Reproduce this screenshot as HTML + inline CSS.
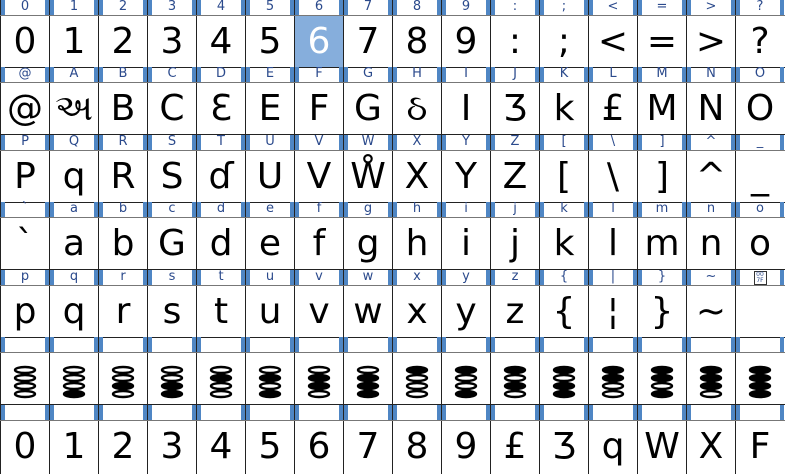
<!DOCTYPE html><html><head><meta charset="utf-8"><style>
body{margin:0;width:785px;height:474px;background:#fff;overflow:hidden;position:relative;font-family:"DejaVu Sans","Liberation Sans","Noto Sans CJK SC",sans-serif}
.r{position:absolute;left:0;width:785px;height:68px}
.h,.g{position:absolute;left:0;width:785px;display:flex}
.h{top:0;height:15px;border-bottom:1px solid #777}
.g{top:16px;height:51px;border-bottom:1px solid #222}
.h div,.g div{width:48px;border-left:1px solid #222;text-align:center;position:relative;flex:none}
.h div{font-size:13px;line-height:14px;color:#2b4a8c}
.h div:before,.h div:after{content:"";position:absolute;top:0;width:4px;height:15px;background:#4f86c4}
.h div:before{left:0}.h div:after{right:0}
.g div{font-size:36px;line-height:51px;color:#000}
.g div.s{background:#86aedc;color:#fff}
.g svg{margin-top:11px}
</style></head><body>
<div class="r" style="top:0"><div class="h"><div>0</div><div>1</div><div>2</div><div>3</div><div>4</div><div>5</div><div>6</div><div>7</div><div>8</div><div>9</div><div>:</div><div>;</div><div>&lt;</div><div>=</div><div>&gt;</div><div>?</div></div>
<div class="g"><div>0</div><div>1</div><div>2</div><div>3</div><div>4</div><div>5</div><div class="s">6</div><div>7</div><div>8</div><div>9</div><div>:</div><div>;</div><div>&lt;</div><div>=</div><div>&gt;</div><div>?</div></div></div>
<div class="r" style="top:67px"><div class="h"><div>@</div><div>A</div><div>B</div><div>C</div><div>D</div><div>E</div><div>F</div><div>G</div><div>H</div><div>I</div><div>J</div><div>K</div><div>L</div><div>M</div><div>N</div><div>O</div></div>
<div class="g"><div>@</div><div>અ</div><div>B</div><div>C</div><div>Ɛ</div><div>E</div><div>F</div><div>G</div><div>ઠ</div><div>I</div><div>Ʒ</div><div>k</div><div>£</div><div>M</div><div>N</div><div>O</div></div></div>
<div class="r" style="top:135px"><div class="h"><div>P</div><div>Q</div><div>R</div><div>S</div><div>T</div><div>U</div><div>V</div><div>W</div><div>X</div><div>Y</div><div>Z</div><div>[</div><div>\</div><div>]</div><div>^</div><div>_</div></div>
<div class="g"><div>P</div><div>q</div><div>R</div><div>S</div><div>ɗ</div><div>U</div><div>V</div><div>W̊</div><div>X</div><div>Y</div><div>Z</div><div>[</div><div>\</div><div>]</div><div>^</div><div>_</div></div></div>
<div class="r" style="top:202px"><div class="h"><div>`</div><div>a</div><div>b</div><div>c</div><div>d</div><div>e</div><div>f</div><div>g</div><div>h</div><div>i</div><div>j</div><div>k</div><div>l</div><div>m</div><div>n</div><div>o</div></div>
<div class="g"><div>`</div><div>a</div><div>b</div><div>G</div><div>d</div><div>e</div><div>f</div><div>g</div><div>h</div><div>i</div><div>j</div><div>k</div><div>l</div><div>m</div><div>n</div><div>o</div></div></div>
<div class="r" style="top:270px"><div class="h"><div>p</div><div>q</div><div>r</div><div>s</div><div>t</div><div>u</div><div>v</div><div>w</div><div>x</div><div>y</div><div>z</div><div>{</div><div>|</div><div>}</div><div>~</div><div><span style="display:inline-block;border:1px solid #333;font-size:6px;line-height:6px;width:11px;margin-top:1px;background:#fff;position:relative;z-index:1">00<br>7F</span></div></div>
<div class="g"><div>p</div><div>q</div><div>r</div><div>s</div><div>t</div><div>u</div><div>v</div><div>w</div><div>x</div><div>y</div><div>z</div><div>{</div><div>¦</div><div>}</div><div>~</div><div></div></div></div>
<div class="r" style="top:337px"><div class="h"><div></div><div></div><div></div><div></div><div></div><div></div><div></div><div></div><div></div><div></div><div></div><div></div><div></div><div></div><div></div><div></div></div>
<div class="g">
<div><svg width="24" height="36"><g stroke="#000" stroke-width="2.4"><ellipse cx="12" cy="6" rx="10" ry="3" fill="#fff"/><ellipse cx="12" cy="14" rx="10" ry="3" fill="#fff"/><ellipse cx="12" cy="22" rx="10" ry="3" fill="#fff"/><ellipse cx="12" cy="30" rx="10" ry="3" fill="#fff"/></g></svg></div>
<div><svg width="24" height="36"><g stroke="#000" stroke-width="2.4"><ellipse cx="12" cy="6" rx="10" ry="3" fill="#fff"/><ellipse cx="12" cy="14" rx="10" ry="3" fill="#fff"/><ellipse cx="12" cy="22" rx="10" ry="3" fill="#fff"/><ellipse cx="12" cy="30" rx="10" ry="3" fill="#000"/></g></svg></div>
<div><svg width="24" height="36"><g stroke="#000" stroke-width="2.4"><ellipse cx="12" cy="6" rx="10" ry="3" fill="#fff"/><ellipse cx="12" cy="14" rx="10" ry="3" fill="#fff"/><ellipse cx="12" cy="22" rx="10" ry="3" fill="#000"/><ellipse cx="12" cy="30" rx="10" ry="3" fill="#fff"/></g></svg></div>
<div><svg width="24" height="36"><g stroke="#000" stroke-width="2.4"><ellipse cx="12" cy="6" rx="10" ry="3" fill="#fff"/><ellipse cx="12" cy="14" rx="10" ry="3" fill="#fff"/><ellipse cx="12" cy="22" rx="10" ry="3" fill="#000"/><ellipse cx="12" cy="30" rx="10" ry="3" fill="#000"/></g></svg></div>
<div><svg width="24" height="36"><g stroke="#000" stroke-width="2.4"><ellipse cx="12" cy="6" rx="10" ry="3" fill="#fff"/><ellipse cx="12" cy="14" rx="10" ry="3" fill="#000"/><ellipse cx="12" cy="22" rx="10" ry="3" fill="#fff"/><ellipse cx="12" cy="30" rx="10" ry="3" fill="#fff"/></g></svg></div>
<div><svg width="24" height="36"><g stroke="#000" stroke-width="2.4"><ellipse cx="12" cy="6" rx="10" ry="3" fill="#fff"/><ellipse cx="12" cy="14" rx="10" ry="3" fill="#000"/><ellipse cx="12" cy="22" rx="10" ry="3" fill="#fff"/><ellipse cx="12" cy="30" rx="10" ry="3" fill="#000"/></g></svg></div>
<div><svg width="24" height="36"><g stroke="#000" stroke-width="2.4"><ellipse cx="12" cy="6" rx="10" ry="3" fill="#fff"/><ellipse cx="12" cy="14" rx="10" ry="3" fill="#000"/><ellipse cx="12" cy="22" rx="10" ry="3" fill="#000"/><ellipse cx="12" cy="30" rx="10" ry="3" fill="#fff"/></g></svg></div>
<div><svg width="24" height="36"><g stroke="#000" stroke-width="2.4"><ellipse cx="12" cy="6" rx="10" ry="3" fill="#fff"/><ellipse cx="12" cy="14" rx="10" ry="3" fill="#000"/><ellipse cx="12" cy="22" rx="10" ry="3" fill="#000"/><ellipse cx="12" cy="30" rx="10" ry="3" fill="#000"/></g></svg></div>
<div><svg width="24" height="36"><g stroke="#000" stroke-width="2.4"><ellipse cx="12" cy="6" rx="10" ry="3" fill="#000"/><ellipse cx="12" cy="14" rx="10" ry="3" fill="#fff"/><ellipse cx="12" cy="22" rx="10" ry="3" fill="#fff"/><ellipse cx="12" cy="30" rx="10" ry="3" fill="#fff"/></g></svg></div>
<div><svg width="24" height="36"><g stroke="#000" stroke-width="2.4"><ellipse cx="12" cy="6" rx="10" ry="3" fill="#000"/><ellipse cx="12" cy="14" rx="10" ry="3" fill="#fff"/><ellipse cx="12" cy="22" rx="10" ry="3" fill="#fff"/><ellipse cx="12" cy="30" rx="10" ry="3" fill="#000"/></g></svg></div>
<div><svg width="24" height="36"><g stroke="#000" stroke-width="2.4"><ellipse cx="12" cy="6" rx="10" ry="3" fill="#000"/><ellipse cx="12" cy="14" rx="10" ry="3" fill="#fff"/><ellipse cx="12" cy="22" rx="10" ry="3" fill="#000"/><ellipse cx="12" cy="30" rx="10" ry="3" fill="#fff"/></g></svg></div>
<div><svg width="24" height="36"><g stroke="#000" stroke-width="2.4"><ellipse cx="12" cy="6" rx="10" ry="3" fill="#000"/><ellipse cx="12" cy="14" rx="10" ry="3" fill="#fff"/><ellipse cx="12" cy="22" rx="10" ry="3" fill="#000"/><ellipse cx="12" cy="30" rx="10" ry="3" fill="#000"/></g></svg></div>
<div><svg width="24" height="36"><g stroke="#000" stroke-width="2.4"><ellipse cx="12" cy="6" rx="10" ry="3" fill="#000"/><ellipse cx="12" cy="14" rx="10" ry="3" fill="#000"/><ellipse cx="12" cy="22" rx="10" ry="3" fill="#fff"/><ellipse cx="12" cy="30" rx="10" ry="3" fill="#fff"/></g></svg></div>
<div><svg width="24" height="36"><g stroke="#000" stroke-width="2.4"><ellipse cx="12" cy="6" rx="10" ry="3" fill="#000"/><ellipse cx="12" cy="14" rx="10" ry="3" fill="#000"/><ellipse cx="12" cy="22" rx="10" ry="3" fill="#fff"/><ellipse cx="12" cy="30" rx="10" ry="3" fill="#000"/></g></svg></div>
<div><svg width="24" height="36"><g stroke="#000" stroke-width="2.4"><ellipse cx="12" cy="6" rx="10" ry="3" fill="#000"/><ellipse cx="12" cy="14" rx="10" ry="3" fill="#000"/><ellipse cx="12" cy="22" rx="10" ry="3" fill="#000"/><ellipse cx="12" cy="30" rx="10" ry="3" fill="#fff"/></g></svg></div>
<div><svg width="24" height="36"><g stroke="#000" stroke-width="2.4"><ellipse cx="12" cy="6" rx="10" ry="3" fill="#000"/><ellipse cx="12" cy="14" rx="10" ry="3" fill="#000"/><ellipse cx="12" cy="22" rx="10" ry="3" fill="#000"/><ellipse cx="12" cy="30" rx="10" ry="3" fill="#000"/></g></svg></div>
</div></div>
<div class="r" style="top:405px"><div class="h"><div></div><div></div><div></div><div></div><div></div><div></div><div></div><div></div><div></div><div></div><div></div><div></div><div></div><div></div><div></div><div></div></div>
<div class="g" style="border-bottom:none;height:53px;line-height:58px"><div>0</div><div>1</div><div>2</div><div>3</div><div>4</div><div>5</div><div>6</div><div>7</div><div>8</div><div>9</div><div>£</div><div>Ʒ</div><div>q</div><div>W</div><div>X</div><div>F</div></div></div>
</body></html>
